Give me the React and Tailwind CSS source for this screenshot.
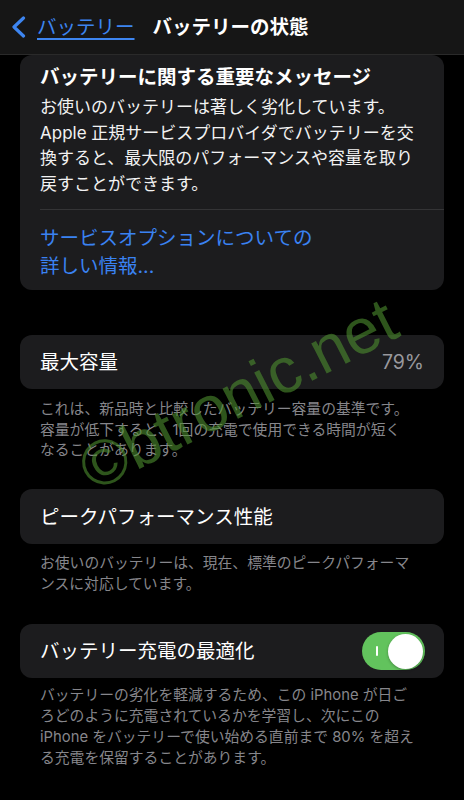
import React from "react";

function Card({ className = "", children }) {
  return <div className={"rounded-[12px] bg-[#1c1c1e] " + className}>{children}</div>;
}

function Toggle() {
  return (
    <div className="relative w-[63px] h-[38px] rounded-full bg-[#62c35d] flex items-center">
      <div className="absolute left-[14px] top-[14px] w-[1.5px] h-[10px] bg-white rounded-full" />
      <div className="absolute right-[2px] top-[1.5px] w-[35px] h-[35px] rounded-full bg-white shadow-[0_1px_3px_rgba(0,0,0,0.3)]" />
    </div>
  );
}

export default function App() {
  return (
    <div className="relative w-[464px] h-[800px] overflow-hidden bg-black text-white font-['Inter','Noto_Sans_CJK_JP',sans-serif]">
      {/* Nav bar */}
      <div className="h-[55px] bg-[#161616] border-b border-[#2a2a2a] flex items-center">
        <svg className="ml-[11px] shrink-0" width="15" height="22" viewBox="0 0 15 22" fill="none">
          <path d="M12.5 2 L3 11 L12.5 20" stroke="#3d85f0" strokeWidth="3.2" strokeLinecap="round" strokeLinejoin="round" />
        </svg>
        <span className="ml-[11px] text-[19.5px] leading-[26px] text-[#3d85f0] underline underline-offset-[4px] decoration-[1.5px]">
          バッテリー
        </span>
        <span className="ml-[18px] text-[19.5px] leading-[26px] font-bold">バッテリーの状態</span>
      </div>

      <div className="px-[20px]">
        {/* Important message card */}
        <Card className="pt-[9px] pb-[10px]">
          <div className="px-[20px] text-[19.5px] leading-[26px] font-bold whitespace-nowrap">
            バッテリーに関する重要なメッセージ
          </div>
          <div className="mt-[5px] px-[20px] text-[17px] leading-[25.5px] whitespace-nowrap text-[#f2f2f2]">
            <div>お使いのバッテリーは著しく劣化しています。</div>
            <div>Apple 正規サービスプロバイダでバッテリーを交</div>
            <div>換すると、最大限のパフォーマンスや容量を取り</div>
            <div>戻すことができます。</div>
          </div>
          <div className="mt-[12px] ml-[20px] h-px bg-[#343436]" />
          <div className="mt-[14px] px-[20px] text-[19.5px] leading-[28px] text-[#3a82f2] whitespace-nowrap">
            <div>サービスオプションについての</div>
            <div>詳しい情報...</div>
          </div>
        </Card>

        {/* Max capacity */}
        <Card className="mt-[45px] h-[54px] flex items-center justify-between px-[20px]">
          <span className="text-[19.5px] leading-[26px]">最大容量</span>
          <span className="text-[19.5px] leading-[26px] text-[#98989d]">79%</span>
        </Card>
        <div className="pt-[10px] px-[20px] text-[14.8px] leading-[20.5px] text-[#86868b] whitespace-nowrap">
          <div>これは、新品時と比較したバッテリー容量の基準です。</div>
          <div>容量が低下すると、1回の充電で使用できる時間が短く</div>
          <div>なることがあります。</div>
        </div>

        {/* Peak performance */}
        <Card className="mt-[28.5px] h-[55px] flex items-center px-[20px]">
          <span className="text-[19.5px] leading-[26px]">ピークパフォーマンス性能</span>
        </Card>
        <div className="pt-[9px] px-[20px] text-[14.8px] leading-[20.5px] text-[#86868b] whitespace-nowrap">
          <div>お使いのバッテリーは、現在、標準のピークパフォーマ</div>
          <div>ンスに対応しています。</div>
        </div>

        {/* Optimized charging */}
        <Card className="mt-[30px] h-[54px] flex items-center justify-between pl-[20px] pr-[19px]">
          <span className="text-[19.5px] leading-[26px]">バッテリー充電の最適化</span>
          <Toggle />
        </Card>
        <div className="pt-[7px] px-[20px] text-[14.8px] leading-[21px] text-[#86868b] whitespace-nowrap">
          <div>バッテリーの劣化を軽減するため、この iPhone が日ご</div>
          <div>ろどのように充電されているかを学習し、次にこの</div>
          <div>iPhone をバッテリーで使い始める直前まで 80% を超え</div>
          <div>る充電を保留することがあります。</div>
        </div>
      </div>

      {/* Watermark */}
      <div className="pointer-events-none absolute left-[238px] top-[394px] -translate-x-1/2 -translate-y-1/2 -rotate-[27deg] whitespace-nowrap font-['Liberation_Sans',sans-serif] text-[64px] leading-none text-[rgba(76,142,46,0.6)]">
        ©btronic.net
      </div>
    </div>
  );
}
